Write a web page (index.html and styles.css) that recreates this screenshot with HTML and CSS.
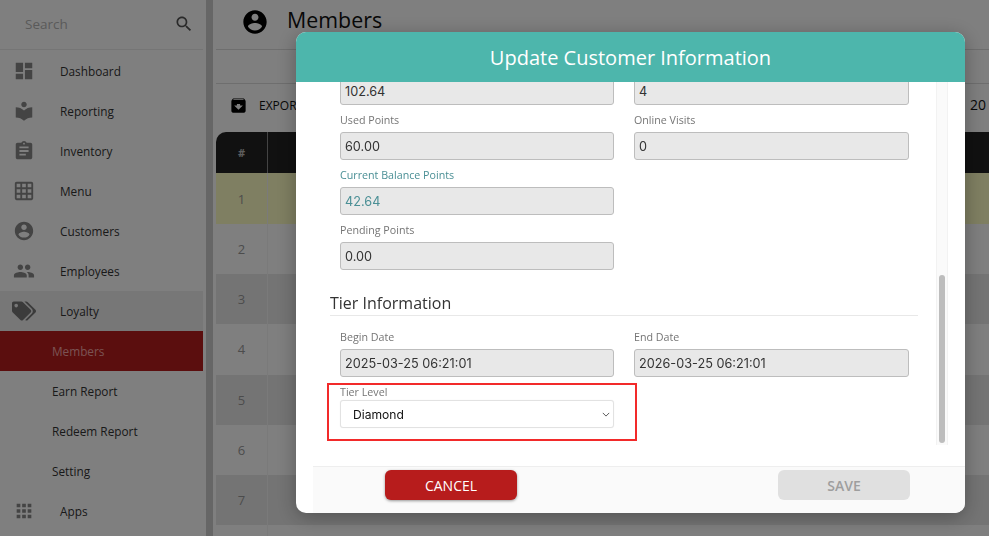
FILE: index.html
```html
<!DOCTYPE html>
<html lang="en">
<head>
<meta charset="utf-8">
<title>Members</title>
<link rel="stylesheet" href="styles.css">
</head>
<body>
<div class="app">
  <aside class="sidebar">
    <div class="search">
      <span class="search-text">Search</span>
      <svg class="search-icon" viewBox="0 0 24 24"><path d="M15.5 14h-.79l-.28-.27C15.41 12.59 16 11.11 16 9.5 16 5.91 13.09 3 9.5 3S3 5.91 3 9.5 5.91 16 9.5 16c1.61 0 3.09-.59 4.23-1.57l.27.28v.79l5 4.99L20.49 19l-4.99-5zm-6 0C7.01 14 5 11.99 5 9.5S7.01 5 9.5 5 14 7.01 14 9.5 11.99 14 9.5 14z"/></svg>
    </div>
    <nav class="nav">
      <div class="nav-item"><svg class="nav-icon" viewBox="0 0 24 24"><path d="M3 13h8V3H3v10zm0 8h8v-6H3v6zm10 0h8V11h-8v10zm0-18v6h8V3h-8z"/></svg><span>Dashboard</span></div>
      <div class="nav-item"><svg class="nav-icon" viewBox="0 0 24 24"><path d="M12 11.55C9.64 9.35 6.48 8 3 8v11c3.48 0 6.64 1.35 9 3.55 2.36-2.19 5.52-3.55 9-3.55V8c-3.48 0-6.64 1.35-9 3.55zM12 8c1.66 0 3-1.34 3-3s-1.34-3-3-3-3 1.34-3 3 1.34 3 3 3z"/></svg><span>Reporting</span></div>
      <div class="nav-item"><svg class="nav-icon" viewBox="0 0 24 24"><path d="M19 3h-4.18C14.4 1.84 13.3 1 12 1c-1.3 0-2.4.84-2.82 2H5c-1.1 0-2 .9-2 2v14c0 1.1.9 2 2 2h14c1.1 0 2-.9 2-2V5c0-1.1-.9-2-2-2zm-7 0c.55 0 1 .45 1 1s-.45 1-1 1-1-.45-1-1 .45-1 1-1zm2 14H7v-2h7v2zm3-4H7v-2h10v2zm0-4H7V7h10v2z"/></svg><span>Inventory</span></div>
      <div class="nav-item"><svg class="nav-icon" viewBox="0 0 24 24"><path d="M20 2H4c-1.1 0-2 .9-2 2v16c0 1.1.9 2 2 2h16c1.1 0 2-.9 2-2V4c0-1.1-.9-2-2-2zM8 20H4v-4h4v4zm0-6H4v-4h4v4zm0-6H4V4h4v4zm6 12h-4v-4h4v4zm0-6h-4v-4h4v4zm0-6h-4V4h4v4zm6 12h-4v-4h4v4zm0-6h-4v-4h4v4zm0-6h-4V4h4v4z"/></svg><span>Menu</span></div>
      <div class="nav-item"><svg class="nav-icon" viewBox="0 0 24 24"><path d="M12 2C6.48 2 2 6.48 2 12s4.48 10 10 10 10-4.48 10-10S17.52 2 12 2zm0 3c1.66 0 3 1.34 3 3s-1.34 3-3 3-3-1.34-3-3 1.34-3 3-3zm0 14.2c-2.5 0-4.71-1.28-6-3.22.03-1.99 4-3.08 6-3.08 1.99 0 5.97 1.09 6 3.08-1.29 1.94-3.5 3.22-6 3.22z"/></svg><span>Customers</span></div>
      <div class="nav-item"><svg class="nav-icon" viewBox="0 0 24 24"><path d="M16 11c1.66 0 2.99-1.34 2.99-3S17.66 5 16 5c-1.66 0-3 1.34-3 3s1.34 3 3 3zm-8 0c1.66 0 2.99-1.34 2.99-3S9.66 5 8 5C6.34 5 5 6.34 5 8s1.34 3 3 3zm0 2c-2.33 0-7 1.17-7 3.5V19h14v-2.5c0-2.33-4.67-3.5-7-3.5zm8 0c-.29 0-.62.02-.97.05 1.16.84 1.97 1.97 1.97 3.45V19h6v-2.5c0-2.33-4.67-3.5-7-3.5z"/></svg><span>Employees</span></div>
      <div class="nav-item nav-item-open"><svg class="nav-icon nav-icon-wide" viewBox="0 0 640 512"><path d="M497.941 225.941L286.059 14.059A48 48 0 0 0 252.118 0H48C21.49 0 0 21.49 0 48v204.118a48 48 0 0 0 14.059 33.941l211.882 211.882c18.744 18.745 49.136 18.746 67.882 0l204.118-204.118c18.745-18.745 18.745-49.137 0-67.882zM112 160c-26.51 0-48-21.49-48-48s21.49-48 48-48 48 21.49 48 48-21.49 48-48 48zm513.941 133.823L421.823 497.941c-18.745 18.745-49.137 18.745-67.882 0l-.36-.36L527.64 323.522c16.999-16.999 26.36-39.6 26.36-63.64s-9.362-46.641-26.36-63.64L331.397 0h48.721a48 48 0 0 1 33.941 14.059l211.882 211.882c18.745 18.745 18.745 49.137 0 67.882z"/></svg><span>Loyalty</span></div>
      <div class="nav-sub nav-sub-active">Members</div>
      <div class="nav-sub">Earn Report</div>
      <div class="nav-sub">Redeem Report</div>
      <div class="nav-sub">Setting</div>
      <div class="nav-item"><svg class="nav-icon" viewBox="0 0 24 24"><path d="M4 8h4V4H4v4zm6 12h4v-4h-4v4zm-6 0h4v-4H4v4zm0-6h4v-4H4v4zm6 0h4v-4h-4v4zm6-10v4h4V4h-4zm-6 4h4V4h-4v4zm6 6h4v-4h-4v4zm0 6h4v-4h-4v4z"/></svg><span>Apps</span></div>
    </nav>
  </aside>
  <div class="side-scroll"><div class="side-thumb"></div></div>
  <main class="main">
    <header class="page-head">
      <svg class="page-icon" viewBox="0 0 24 24"><path d="M12 2C6.48 2 2 6.48 2 12s4.48 10 10 10 10-4.48 10-10S17.52 2 12 2zm0 3c1.66 0 3 1.34 3 3s-1.34 3-3 3-3-1.34-3-3 1.34-3 3-3zm0 14.2c-2.5 0-4.71-1.28-6-3.22.03-1.99 4-3.08 6-3.08 1.99 0 5.97 1.09 6 3.08-1.29 1.94-3.5 3.22-6 3.22z"/></svg>
      <h1 class="page-title">Members</h1>
    </header>
    <div class="tabs"></div>
    <div class="toolbar">
      <div class="export">
        <svg class="export-icon" viewBox="0 0 24 24"><path d="M20.54 5.23l-1.39-1.68C18.88 3.21 18.47 3 18 3H6c-.47 0-.88.21-1.16.55L3.46 5.23C3.17 5.57 3 6.02 3 6.5V19c0 1.1.9 2 2 2h14c1.1 0 2-.9 2-2V6.5c0-.48-.17-.93-.46-1.27zM12 17.5L6.5 12H10v-2h4v2h3.5L12 17.5zM5.12 5l.81-1h12l.94 1H5.12z"/></svg>
        <span>EXPORT</span>
      </div>
      <span class="page-size">20</span>
    </div>
    <div class="table">
      <div class="row row-head"><div class="cell-num">#</div><div class="cell-rest"></div></div>
      <div class="row row-hi"><div class="cell-num">1</div><div class="cell-rest"></div></div>
      <div class="row"><div class="cell-num">2</div><div class="cell-rest"></div></div>
      <div class="row row-alt"><div class="cell-num">3</div><div class="cell-rest"></div></div>
      <div class="row"><div class="cell-num">4</div><div class="cell-rest"></div></div>
      <div class="row row-alt"><div class="cell-num">5</div><div class="cell-rest"></div></div>
      <div class="row"><div class="cell-num">6</div><div class="cell-rest"></div></div>
      <div class="row row-alt"><div class="cell-num">7</div><div class="cell-rest"></div></div>
      <div class="row row-last"><div class="cell-num"></div><div class="cell-rest"></div></div>
    </div>
  </main>
</div>

<div class="overlay">
  <section class="modal">
    <h2 class="modal-title">Update Customer Information</h2>
    <div class="modal-body">
      <div class="form">
        <div class="fields fields-clipped">
          <div class="field field-bare"><div class="box">102.64</div></div>
          <div class="field field-bare"><div class="box">4</div></div>
          <div class="field"><div class="label">Used Points</div><div class="box">60.00</div></div>
          <div class="field"><div class="label">Online Visits</div><div class="box">0</div></div>
          <div class="field field-teal"><div class="label">Current Balance Points</div><div class="box">42.64</div></div>
          <div class="field"></div>
          <div class="field"><div class="label">Pending Points</div><div class="box">0.00</div></div>
        </div>
        <h3 class="section-title">Tier Information</h3>
        <div class="fields">
          <div class="field"><div class="label">Begin Date</div><div class="box">2025-03-25 06:21:01</div></div>
          <div class="field"><div class="label">End Date</div><div class="box">2026-03-25 06:21:01</div></div>
          <div class="field field-tier">
            <div class="label">Tier Level</div>
            <div class="select">
              <span>Diamond</span>
              <svg class="chevron" viewBox="0 0 10 6"><path d="M1 1l4 4 4-4"/></svg>
            </div>
            <div class="highlight"></div>
          </div>
        </div>
      </div>
      <div class="scroll-track"><div class="scroll-thumb"></div></div>
    </div>
    <footer class="modal-foot">
      <button class="btn btn-cancel">CANCEL</button>
      <button class="btn btn-save">SAVE</button>
    </footer>
  </section>
</div>
</body>
</html>
```

FILE: styles.css
```css
* { box-sizing: border-box; }
html, body { margin: 0; height: 536px; overflow: hidden; }
body { font-family: "Open Sans", sans-serif; background: #fff; color: #333; }

.app { display: flex; height: 536px; overflow: hidden; }

.sidebar { width: 203px; flex: none; background: #fff; overflow: hidden; }
.search { height: 50px; display: flex; align-items: center; justify-content: space-between; padding: 0 9px 2px 25px; border-bottom: 1px solid #ebebeb; }
.search-text { font-size: 13.5px; color: #b5b5b5; }
.search-icon { width: 20px; height: 20px; fill: #555; }
.nav { padding-top: 1px; }
.nav-item { height: 40px; display: flex; align-items: center; font-size: 11.8px; color: #333; padding-left: 13px; gap: 25px; }
.nav-icon { width: 22px; height: 22px; fill: #888; flex: none; }
.nav-icon-wide { width: 24px; height: 24px; margin: 0 -1px 0 -1px; }
.nav-item-open { background: #eee; }
.nav-item-open .nav-icon { fill: #777; }
.nav-sub { height: 40px; display: flex; align-items: center; font-size: 11.8px; color: #333; padding-left: 52px; }
.nav-sub-active { background: #b71c1c; color: #f4a6a6; }

.side-scroll { width: 13px; flex: none; padding: 0 3px; background: #fff; }
.side-thumb { height: 536px; background: #ccc; }

.main { flex: 1; min-width: 0; background: #fff; }
.page-head { height: 50px; display: flex; align-items: center; gap: 18.5px; padding: 0 0 6px 24.5px; border-bottom: 1px solid #ddd; }
.page-icon { width: 28px; height: 28px; fill: #000; }
.page-title { margin: 0 0 4px; font-size: 21.4px; font-weight: 400; color: #111; }
.tabs { height: 34px; border-bottom: 1px solid #ddd; }
.toolbar { height: 48px; display: flex; align-items: center; justify-content: space-between; padding: 0 3px 6px 12.5px; }
.export { display: flex; align-items: center; gap: 11.5px; font-size: 12px; color: #111; }
.export-icon { width: 19px; height: 19px; fill: #000; }
.page-size { font-size: 14px; color: #111; padding-bottom: 2px; }

.row { display: flex; height: 50.2px; background: #fff; font-size: 13px; color: #999; }
.row-alt { background: #e9e9e9; }
.row-hi { height: 51px; background: #ffffc4; }
.row-head { height: 41px; background: #222; color: #bbb; border-top-left-radius: 10px; font-size: 11px; font-weight: 700; }
.cell-num { width: 52px; flex: none; display: flex; align-items: center; justify-content: center; border-right: 1px solid #f4f4f4; }
.row-head .cell-num { border-right: 1px solid #888; }
.cell-rest { flex: 1; }

.overlay { position: fixed; inset: 0; background: rgba(0, 0, 0, .5); }
.modal { position: absolute; left: 296px; top: 32px; width: 669px; height: 481px; display: flex; flex-direction: column; background: #fff; border-radius: 10px; overflow: hidden; box-shadow: 0 4px 20px rgba(0, 0, 0, .3); }
.modal-title { margin: 0; height: 50px; flex: none; display: flex; align-items: center; justify-content: center; background: #4db6ac; color: #fff; font-size: 20px; font-weight: 500; }
.modal-body { flex: none; height: 384px; display: flex; overflow: hidden; }
.form { flex: 1; min-width: 0; padding-left: 34px; }
.fields { display: grid; grid-template-columns: 274px 275px; column-gap: 20px; row-gap: 5px; padding-left: 10px; }
.fields-clipped { margin-top: -5px; }
.field { height: 50px; position: relative; }
.field-bare { height: 28px; }
.label { height: 18px; line-height: 20px; margin-bottom: 4px; font-size: 10.7px; color: #757575; }
.box { height: 28px; display: flex; align-items: center; padding: 1px 0 0 4px; background: #e8e8e8; border: 1px solid #bdbdbd; border-radius: 3px; font-family: Inter, sans-serif; font-size: 12.7px; color: #333; }
.field-teal .label, .field-teal .box { color: #4a8f95; }
.section-title { margin: 21px 0 11px; width: 588px; height: 25px; line-height: 24px; border-bottom: 1px solid #e8e8e8; font-size: 16px; font-weight: 400; color: #333; }
.field-tier .label { margin: 0; }
.select { height: 28px; display: flex; align-items: center; justify-content: space-between; padding: 1px 3px 0 12px; background: #fff; border: 1px solid #e2e2e2; border-radius: 3px; box-shadow: 0 0 1px rgba(0, 0, 0, .1); font-family: Inter, sans-serif; font-size: 12.1px; color: #111; }
.chevron { width: 8px; height: 5px; fill: none; stroke: #555; stroke-width: 1.2; }
.highlight { position: absolute; left: -13px; top: 1px; width: 310px; height: 58px; border: 2px solid #f22a2a; }

.scroll-track { width: 12px; height: 363px; margin-right: 17px; flex: none; padding: 0 2px; background: #fafafa; border-left: 1px solid #f2f2f2; border-right: 1px solid #f2f2f2; }
.scroll-thumb { width: 6px; height: 168px; margin-top: 193px; border-radius: 3px; background: #bdbdbd; }

.modal-foot { flex: 1; margin-left: 17px; display: flex; justify-content: space-between; padding: 3px 55px 0 72px; background: #fafafa; border-top: 1px solid #eee; }
.btn { width: 132px; height: 30px; border: 0; border-radius: 6px; font-family: "Open Sans", sans-serif; font-size: 14px; }
.btn-cancel { background: #b71c1c; color: #fff; box-shadow: 0 1px 3px rgba(0, 0, 0, .4); }
.btn-save { background: #e0e0e0; color: #9e9e9e; font-weight: 600; }
```
